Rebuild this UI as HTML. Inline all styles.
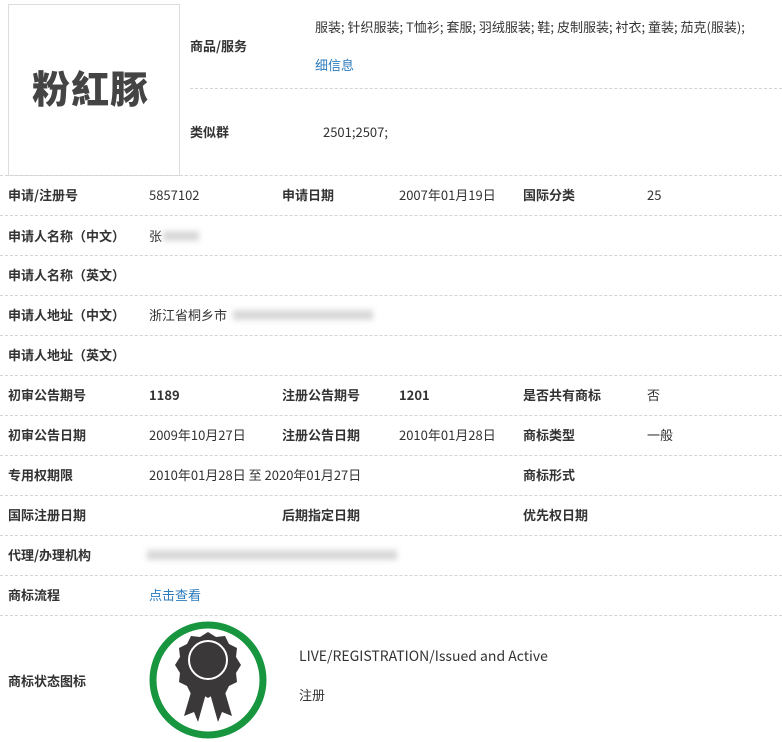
<html><head><style>
body{margin:0;width:782px;height:741px;background:#fff;font-family:"Noto Sans CJK SC","Liberation Sans",sans-serif;font-size:13px;line-height:16px;color:#333;position:relative;overflow:hidden}
.a{position:absolute;white-space:nowrap}
.b{font-weight:bold}
.d{position:absolute;left:0;width:782px;border-top:1px dashed #d4d4d4}
.bl{position:absolute;background:#d8d8d8;filter:blur(3px);height:10px}
.ln{color:#2b7bbd}
</style></head><body>
<div class="a" style="left:8px;top:4px;width:170px;height:170px;border:1px solid #ddd"></div>
<div class="a" style="left:32px;top:62px;font-size:38px;line-height:50px;font-weight:900;color:#444;letter-spacing:1px">粉紅豚</div>
<div class="a b" style="left:190px;top:38px">商品/服务</div>
<div class="a" style="left:315px;top:19px">服装; 针织服装; T恤衫; 套服; 羽绒服装; 鞋; 皮制服装; 衬衣; 童装; 茄克(服装);</div>
<div class="a ln" style="left:315px;top:57px">细信息</div>
<div class="d" style="left:190px;top:88px;width:592px"></div>
<div class="a b" style="left:190px;top:124px">类似群</div>
<div class="a" style="left:323px;top:124px">2501;2507;</div>
<div class="d" style="top:175px"></div>
<div class="a b" style="left:8px;top:187px">申请/注册号</div><div class="a" style="left:149px;top:187px">5857102</div>
<div class="a b" style="left:282px;top:187px">申请日期</div><div class="a" style="left:399px;top:187px">2007年01月19日</div>
<div class="a b" style="left:523px;top:187px">国际分类</div><div class="a" style="left:647px;top:187px">25</div>
<div class="d" style="top:215px"></div>
<div class="a b" style="left:8px;top:228px">申请人名称（中文）</div><div class="a" style="left:149px;top:228px">张</div><div class="bl" style="left:163px;top:231px;width:36px"></div>
<div class="d" style="top:255px"></div>
<div class="a b" style="left:8px;top:267px">申请人名称（英文）</div>
<div class="d" style="top:295px"></div>
<div class="a b" style="left:8px;top:307px">申请人地址（中文）</div><div class="a" style="left:149px;top:307px">浙江省桐乡市</div><div class="bl" style="left:233px;top:310px;width:140px"></div>
<div class="d" style="top:335px"></div>
<div class="a b" style="left:8px;top:347px">申请人地址（英文）</div>
<div class="d" style="top:375px"></div>
<div class="a b" style="left:8px;top:387px">初审公告期号</div><div class="a b" style="left:149px;top:387px">1189</div>
<div class="a b" style="left:282px;top:387px">注册公告期号</div><div class="a b" style="left:399px;top:387px">1201</div>
<div class="a b" style="left:523px;top:387px">是否共有商标</div><div class="a" style="left:647px;top:387px">否</div>
<div class="d" style="top:415px"></div>
<div class="a b" style="left:8px;top:427px">初审公告日期</div><div class="a" style="left:149px;top:427px">2009年10月27日</div>
<div class="a b" style="left:282px;top:427px">注册公告日期</div><div class="a" style="left:399px;top:427px">2010年01月28日</div>
<div class="a b" style="left:523px;top:427px">商标类型</div><div class="a" style="left:647px;top:427px">一般</div>
<div class="d" style="top:455px"></div>
<div class="a b" style="left:8px;top:467px">专用权期限</div><div class="a" style="left:149px;top:467px">2010年01月28日 至 2020年01月27日</div>
<div class="a b" style="left:523px;top:467px">商标形式</div>
<div class="d" style="top:495px"></div>
<div class="a b" style="left:8px;top:507px">国际注册日期</div>
<div class="a b" style="left:282px;top:507px">后期指定日期</div>
<div class="a b" style="left:523px;top:507px">优先权日期</div>
<div class="d" style="top:535px"></div>
<div class="a b" style="left:8px;top:547px">代理/办理机构</div><div class="bl" style="left:147px;top:550px;width:250px"></div>
<div class="d" style="top:575px"></div>
<div class="a b" style="left:8px;top:587px">商标流程</div><div class="a ln" style="left:149px;top:587px">点击查看</div>
<div class="d" style="top:615px"></div>
<div class="a b" style="left:8px;top:673px">商标状态图标</div>
<svg class="a" style="left:148px;top:620px" width="122" height="122" viewBox="0 0 122 122">
<circle cx="60" cy="60" r="55" fill="none" stroke="#17963f" stroke-width="7"/>
<path d="M46 62 L36 96 L46 92 L50 102 L59 70 Z M74 62 L84 96 L74 92 L70 102 L61 70 Z" fill="#3a3838"/>
<path d="M60 40 m0 -28 l8 5 9 -1 4 8 8 4 -1 9 5 8 -5 8 1 9 -8 4 -4 8 -9 -1 -8 5 -8 -5 -9 1 -4 -8 -8 -4 1 -9 -5 -8 5 -8 -1 -9 8 -4 4 -8 9 1z" fill="#3a3838"/>
<circle cx="60" cy="40" r="19" fill="#3a3838" stroke="#fff" stroke-width="2"/>
</svg>
<div class="a" style="left:299px;top:648px;font-size:14px">LIVE/REGISTRATION/Issued and Active</div>
<div class="a" style="left:299px;top:687px">注册</div>
</body></html>
